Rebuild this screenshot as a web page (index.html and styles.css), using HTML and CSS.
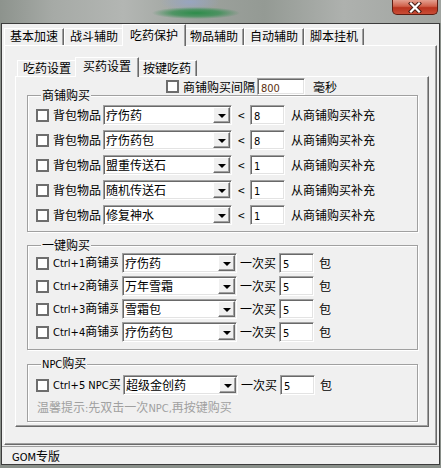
FILE: index.html
```html
<!DOCTYPE html>
<html lang="zh-CN">
<head>
    <meta charset="UTF-8">
    <meta name="viewport" content="width=device-width, initial-scale=1.0">
    <title>吃药保护 - 买药设置</title>
    <link rel="stylesheet" href="styles.css">
</head>
<body>
    <div class="titlebar">
        <div class="close-btn">
            <svg width="16" height="11" viewBox="0 0 16 11">
                <path d="M4 1.5 L12 9.5 M12 1.5 L4 9.5" stroke="#4a1f18" stroke-width="4.2" stroke-linecap="square"/>
                <path d="M4 1.5 L12 9.5 M12 1.5 L4 9.5" stroke="#ffffff" stroke-width="2.2" stroke-linecap="square"/>
            </svg>
        </div>
    </div>

    <div class="window">
        <!-- main tabs -->
        <div class="tabs main-tabs">
            <div class="tab">基本加速</div>
            <div class="tab">战斗辅助</div>
            <div class="tab active">吃药保护</div>
            <div class="tab">物品辅助</div>
            <div class="tab">自动辅助</div>
            <div class="tab">脚本挂机</div>
        </div>

        <div class="tab-panel">
            <!-- sub tabs -->
            <div class="tabs sub-tabs">
                <div class="tab">吃药设置</div>
                <div class="tab active">买药设置</div>
                <div class="tab">按键吃药</div>
            </div>

            <div class="sub-panel">
                <div class="interval-row">
                    <span class="check"></span>
                    <span class="interval-label">商铺购买间隔</span>
                    <span class="input interval-input"><span class="en">800</span></span>
                    <span class="unit">毫秒</span>
                </div>

                <fieldset class="group shop-group">
                    <legend>商铺购买</legend>
                    <div class="row">
                        <span class="check"></span>
                        <span class="bag-label">背包物品</span>
                        <span class="select bag-select"><span class="value">疗伤药</span><span class="arrow"></span></span>
                        <span class="lt">&lt;</span>
                        <span class="input"><span class="en">8</span></span>
                        <span class="refill">从商铺购买补充</span>
                    </div>
                    <div class="row">
                        <span class="check"></span>
                        <span class="bag-label">背包物品</span>
                        <span class="select bag-select"><span class="value">疗伤药包</span><span class="arrow"></span></span>
                        <span class="lt">&lt;</span>
                        <span class="input"><span class="en">8</span></span>
                        <span class="refill">从商铺购买补充</span>
                    </div>
                    <div class="row">
                        <span class="check"></span>
                        <span class="bag-label">背包物品</span>
                        <span class="select bag-select"><span class="value">盟重传送石</span><span class="arrow"></span></span>
                        <span class="lt">&lt;</span>
                        <span class="input"><span class="en">1</span></span>
                        <span class="refill">从商铺购买补充</span>
                    </div>
                    <div class="row">
                        <span class="check"></span>
                        <span class="bag-label">背包物品</span>
                        <span class="select bag-select"><span class="value">随机传送石</span><span class="arrow"></span></span>
                        <span class="lt">&lt;</span>
                        <span class="input"><span class="en">1</span></span>
                        <span class="refill">从商铺购买补充</span>
                    </div>
                    <div class="row">
                        <span class="check"></span>
                        <span class="bag-label">背包物品</span>
                        <span class="select bag-select"><span class="value">修复神水</span><span class="arrow"></span></span>
                        <span class="lt">&lt;</span>
                        <span class="input"><span class="en">1</span></span>
                        <span class="refill">从商铺购买补充</span>
                    </div>
                </fieldset>

                <fieldset class="group hotkey-group">
                    <legend>一键购买</legend>
                    <div class="row">
                        <span class="check"></span>
                        <span class="hk-label"><span class="en">Ctrl+1</span>商铺买</span>
                        <span class="select hk-select"><span class="value">疗伤药</span><span class="arrow"></span></span>
                        <span class="once">一次买</span>
                        <span class="input"><span class="en">5</span></span>
                        <span class="pack">包</span>
                    </div>
                    <div class="row">
                        <span class="check"></span>
                        <span class="hk-label"><span class="en">Ctrl+2</span>商铺买</span>
                        <span class="select hk-select"><span class="value">万年雪霜</span><span class="arrow"></span></span>
                        <span class="once">一次买</span>
                        <span class="input"><span class="en">5</span></span>
                        <span class="pack">包</span>
                    </div>
                    <div class="row">
                        <span class="check"></span>
                        <span class="hk-label"><span class="en">Ctrl+3</span>商铺买</span>
                        <span class="select hk-select"><span class="value">雪霜包</span><span class="arrow"></span></span>
                        <span class="once">一次买</span>
                        <span class="input"><span class="en">5</span></span>
                        <span class="pack">包</span>
                    </div>
                    <div class="row">
                        <span class="check"></span>
                        <span class="hk-label"><span class="en">Ctrl+4</span>商铺买</span>
                        <span class="select hk-select"><span class="value">疗伤药包</span><span class="arrow"></span></span>
                        <span class="once">一次买</span>
                        <span class="input"><span class="en">5</span></span>
                        <span class="pack">包</span>
                    </div>
                </fieldset>

                <fieldset class="group npc-group">
                    <legend><span class="en">NPC</span>购买</legend>
                    <div class="row">
                        <span class="check"></span>
                        <span class="hk-label npc-label"><span class="en">Ctrl+5 NPC</span>买</span>
                        <span class="select hk-select npc-select"><span class="value">超级金创药</span><span class="arrow"></span></span>
                        <span class="once">一次买</span>
                        <span class="input"><span class="en">5</span></span>
                        <span class="pack">包</span>
                    </div>
                    <div class="hint">温馨提示<span class="en">:</span>先双击一次<span class="en">NPC,</span>再按键购买</div>
                </fieldset>
            </div>
        </div>

        <div class="statusbar"><span class="en">GOM</span>专版</div>
    </div>
</body>
</html>
```

FILE: styles.css
```css
/* Global */
* {
    box-sizing: border-box;
}

body {
    margin: 0;
    width: 441px;
    height: 468px;
    overflow: hidden;
    background: #8a908a;
    font: 12px/14px "Noto Sans CJK SC", sans-serif;
    color: #000;
}

/* latin text in the dialog font is a bit smaller */
.en {
    font-family: "DejaVu Sans Condensed", "DejaVu Sans", sans-serif;
    font-size: 11px;
}

/* Blurred desktop behind the window */
.titlebar {
    height: 23px;
    display: flex;
    justify-content: flex-end;
    padding-right: 3px;
    background:
        radial-gradient(ellipse 44px 6px at 196px 13px, #2d8c4a 0%, rgba(45, 140, 74, 0.7) 55%, rgba(45, 140, 74, 0) 100%),
        radial-gradient(ellipse 30px 10px at 190px 2px, rgba(150, 165, 200, 0.8), rgba(150, 165, 200, 0)),
        linear-gradient(90deg, #8d938d 0%, #a6aaa6 12%, #b3b6b3 28%, #9da29d 45%, #949a94 60%, #aeb1ae 78%, #a0a4a0 100%);
}

.close-btn {
    width: 46px;
    height: 15px;
    display: flex;
    align-items: center;
    justify-content: center;
    background: linear-gradient(#e4a090, #d0604a 45%, #b9331e 55%, #c94d36);
    border: 1px solid #5e1c11;
    border-top: none;
    border-radius: 0 0 5px 5px;
}

/* Dialog window */
.window {
    margin-left: 1px;
    width: 439px;
    height: 442px;
    border: 1px solid #3c3c3c;
    background: #f0f0f0;
}

/* Tabs */
.tabs {
    display: flex;
    align-items: flex-end;
}

.tab {
    position: relative;
    width: 60px;
    padding-left: 5px;
    border-top: 1px solid #fff;
    border-left: 1px solid #fff;
    border-right: 1px solid #696969;
    box-shadow: inset -1px 0 0 #a0a0a0;
    background: #f0f0f0;
    white-space: nowrap;
}

.tab.active {
    z-index: 1;
    width: 64px;
    margin: 0 -2px -1px;
    padding-left: 7px;
}

.main-tabs {
    height: 21px;
    padding-left: 2px;
}

.main-tabs .tab {
    height: 17px;
}

.main-tabs .tab.active {
    height: 22px;
    padding-top: 3px;
}

.tab-panel {
    margin: 0 2px;
    padding: 10px 7px 17px 10px;
    border: 1px solid;
    border-color: #fff #696969 #696969 #fff;
    box-shadow: inset -1px -1px 0 #a0a0a0;
}

.sub-tabs {
    height: 20px;
    padding-left: 2px;
}

.sub-tabs .tab {
    height: 16px;
}

.sub-tabs .tab.active {
    height: 20px;
    padding-top: 1px;
}

.sub-panel {
    width: 414px;
    height: 351px;
    border: 1px solid;
    border-color: #fff #696969 #696969 #fff;
    box-shadow: inset -1px -1px 0 #a0a0a0;
}

/* Form controls */
.check {
    flex: none;
    width: 13px;
    height: 13px;
    border: 2px solid #6d6d6d;
    background: #fff;
}

.input,
.select {
    flex: none;
    height: 20px;
    background: #fff;
    border: 1px solid;
    border-color: #a0a0a0 #fff #fff #a0a0a0;
    box-shadow: inset 1px 1px 0 #696969, inset -1px -1px 0 #e3e3e3;
}

.input {
    width: 35px;
    padding-left: 3px;
    line-height: 18px;
}

.select {
    display: flex;
}

.select .value {
    flex: 1;
    padding-left: 2px;
    line-height: 17px;
    white-space: nowrap;
    overflow: hidden;
}

.select .arrow {
    flex: none;
    width: 17px;
    margin: 1px 1px 1px 0;
    display: flex;
    align-items: center;
    justify-content: center;
    background: #f0f0f0;
    border: 1px solid;
    border-color: #fff #696969 #696969 #fff;
    box-shadow: inset -1px -1px 0 #a0a0a0;
}

.select .arrow::after {
    content: "";
    border-left: 4px solid transparent;
    border-right: 4px solid transparent;
    border-top: 4px solid #000;
    margin-top: 1px;
}

/* Interval row on top of the shop group */
.interval-row {
    height: 17px;
    margin-top: 1px;
    padding-left: 150px;
    display: flex;
    align-items: center;
}

.interval-label {
    margin-left: 4px;
    width: 72px;
}

.interval-input {
    width: 48px;
    height: 17px;
    margin-left: 2px;
    line-height: 15px;
    color: #5a3010;
}

.unit {
    margin-left: 8px;
}

/* Group boxes */
.group {
    margin: 6px 10px 0 11px;
    padding: 0 0 0 8px;
    min-width: 0;
    border: 1px solid #a0a0a0;
    box-shadow: 1px 1px 0 #fff, inset 1px 1px 0 #fff;
}

.group legend {
    margin-left: 5px;
    padding: 0 1px;
    line-height: 14px;
    background: #f0f0f0;
}

.row {
    height: 20px;
    display: flex;
    align-items: center;
}

.shop-group {
    margin-top: -7px;
    padding-top: 3px;
    padding-bottom: 6px;
}

.shop-group .row + .row {
    margin-top: 5px;
}

.bag-label {
    width: 48px;
    margin-left: 4px;
    white-space: nowrap;
}

.bag-select {
    width: 129px;
    margin-left: 2px;
}

.lt {
    margin-left: 6px;
    width: 7px;
}

.lt + .input {
    margin-left: 5px;
}

.refill {
    margin-left: 6px;
}

.hotkey-group {
    padding-top: 1px;
    padding-bottom: 7px;
}

.hotkey-group .row + .row {
    margin-top: 3px;
}

.hk-label {
    width: 65px;
    margin-left: 4px;
    white-space: nowrap;
    overflow: hidden;
}

.hk-select {
    width: 115px;
    margin-left: 4px;
}

.npc-label {
    width: 68px;
}

.npc-select {
    margin-left: 2px;
}

.once {
    margin-left: 3px;
    width: 36px;
}

.once + .input {
    margin-left: 3px;
}

.pack {
    margin-left: 5px;
}

.npc-group {
    padding-top: 3px;
    padding-bottom: 5px;
}

.hint {
    margin-top: 5px;
    padding-left: 1px;
    color: #a0a0a0;
    white-space: nowrap;
}

/* Status bar */
.statusbar {
    margin-top: 1px;
    height: 18px;
    padding-left: 10px;
    border-top: 1px solid #a0a0a0;
    line-height: 17px;
}
```
